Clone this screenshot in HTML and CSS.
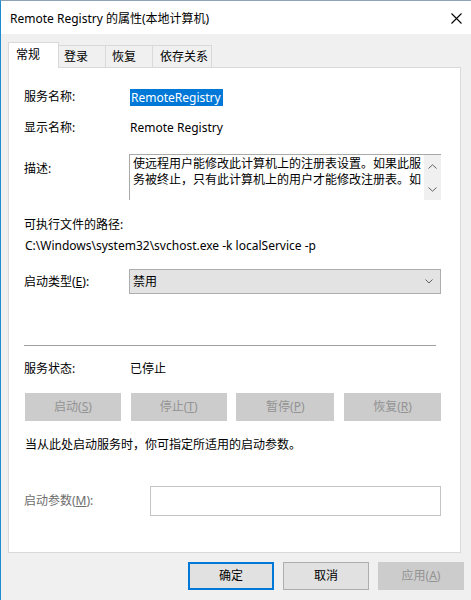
FILE: index.html
```html
<!DOCTYPE html>
<html lang="zh-CN">
<head>
<meta charset="utf-8">
<title>Remote Registry 的属性(本地计算机)</title>
<link rel="stylesheet" href="styles.css">
</head>
<body>
<div class="window">
  <div class="titlebar">
    <span class="title">Remote Registry 的属性(本地计算机)</span>
    <svg class="close" width="11" height="11" viewBox="0 0 11 11"><path d="M0.5 0.5L10.5 10.5M10.5 0.5L0.5 10.5" stroke="#000" stroke-width="1.1" fill="none"/></svg>
  </div>
  <div class="client">
    <div class="tabs">
      <div class="tab active">常规</div>
      <div class="tab t2">登录</div>
      <div class="tab t3">恢复</div>
      <div class="tab t4">依存关系</div>
    </div>
    <div class="panel">
      <div class="row r-name">
        <span class="label">服务名称:</span>
        <span class="selected">RemoteRegistry</span>
      </div>
      <div class="row r-display">
        <span class="label">显示名称:</span>
        <span class="value">Remote Registry</span>
      </div>
      <div class="row r-desc">
        <span class="label label-top">描述:</span>
        <div class="textbox">
          <div class="textbox-text">使远程用户能修改此计算机上的注册表设置。如果此服务被终止，只有此计算机上的用户才能修改注册表。如</div>
          <div class="scrollbar">
            <svg width="9" height="5" viewBox="0 0 9 5"><path d="M0.5 4.5L4.5 0.8L8.5 4.5" stroke="#606060" fill="none"/></svg>
            <svg width="9" height="5" viewBox="0 0 9 5"><path d="M0.5 0.5L4.5 4.2L8.5 0.5" stroke="#606060" fill="none"/></svg>
          </div>
        </div>
      </div>
      <div class="row r-pathlabel"><span>可执行文件的路径:</span></div>
      <div class="row r-path"><span>C:\Windows\system32\svchost.exe -k localService -p</span></div>
      <div class="row r-start">
        <span class="label">启动类型(<u>E</u>):</span>
        <div class="combo">
          <span>禁用</span>
          <svg width="8" height="5" viewBox="0 0 8 5"><path d="M0.5 0.5L4 4L7.5 0.5" stroke="#606060" fill="none"/></svg>
        </div>
      </div>
      <div class="separator"></div>
      <div class="row r-status">
        <span class="label label-status">服务状态:</span>
        <span class="value">已停止</span>
      </div>
      <div class="svc-buttons">
        <div class="btn disabled b1">启动(<u>S</u>)</div>
        <div class="btn disabled b2">停止(<u>T</u>)</div>
        <div class="btn disabled b3">暂停(<u>P</u>)</div>
        <div class="btn disabled b4">恢复(<u>R</u>)</div>
      </div>
      <div class="row r-note"><span>当从此处启动服务时，你可指定所适用的启动参数。</span></div>
      <div class="row r-param">
        <span class="label label-param">启动参数(<u>M</u>):</span>
        <div class="input"></div>
      </div>
    </div>
    <div class="actions">
      <div class="btn default">确定</div>
      <div class="btn">取消</div>
      <div class="btn disabled">应用(<u>A</u>)</div>
    </div>
  </div>
</div>
</body>
</html>
```

FILE: styles.css
```css
html, body {
  margin: 0;
  padding: 0;
}
body {
  width: 471px;
  height: 600px;
  overflow: hidden;
  font-family: "Noto Sans", "Noto Sans CJK SC", sans-serif;
  font-size: 12px;
  color: #000;
  background: #f0f0f0;
}
u {
  text-decoration: underline;
  text-underline-offset: 1px;
}
.window {
  height: 600px;
  box-sizing: border-box;
  border-top: 1px solid #8ea3b8;
  border-left: 1px solid #1f8ccf;
  display: flex;
  flex-direction: column;
  background: #f0f0f0;
}
.titlebar {
  flex: none;
  height: 33px;
  background: #fff;
  display: flex;
  align-items: center;
  justify-content: space-between;
  padding: 0 9px 0 9px;
}
.title {
  line-height: 16px;
  padding-top: 3px;
}
.close {
  display: block;
  margin-top: 1px;
}
.client {
  flex: 1;
  display: flex;
  flex-direction: column;
  padding: 8px 7px 0 7px;
}
.tabs {
  display: flex;
  align-items: flex-end;
  height: 26px;
  margin-bottom: -1px;
}
.tab {
  box-sizing: border-box;
  height: 23px;
  border: 1px solid #d9d9d9;
  border-bottom: none;
  border-left: none;
  background: #f0f0f0;
  line-height: 16px;
  padding: 3px 0 0 6px;
}
.tab.active {
  position: relative;
  z-index: 1;
  height: 26px;
  width: 51px;
  border-left: 1px solid #d9d9d9;
  background: #fff;
  padding: 4px 0 0 7px;
}
.t2 { width: 47px; padding-left: 5px; }
.t3 { width: 47px; }
.t4 { width: 59px; padding-left: 7px; }
.panel {
  box-sizing: border-box;
  height: 486px;
  margin-right: 3px;
  border: 1px solid #d9d9d9;
  background: #fff;
  padding: 0 19px 0 15px;
  display: flex;
  flex-direction: column;
}
.row {
  display: flex;
  align-items: center;
  height: 18px;
  line-height: 18px;
  flex: none;
}
.label {
  width: 106px;
  flex: none;
}
.r-name { margin-top: 20px; }
.selected {
  background: #0078d7;
  color: #fff;
  line-height: 17px;
  padding: 0 2px 0 1px;
}
.r-display { margin-top: 13px; }
.r-desc {
  margin-top: 17px;
  height: 46px;
  align-items: flex-start;
}
.label-top {
  width: 105px;
  padding-top: 6px;
}
.textbox {
  box-sizing: border-box;
  width: 312px;
  height: 46px;
  border-top: 1px solid #a9a9a9;
  border-left: 1px solid #a9a9a9;
  display: flex;
}
.textbox-text {
  width: 291px;
  height: 32px;
  padding: 1px 0 0 3px;
  line-height: 16px;
}
.scrollbar {
  width: 17px;
  height: 45px;
  background: #f0f0f0;
  display: flex;
  flex-direction: column;
  align-items: center;
  justify-content: space-between;
  padding: 9px 0 8px;
  box-sizing: border-box;
}
.scrollbar svg { display: block; }
.r-pathlabel { margin-top: 16px; }
.r-path { margin-top: 3px; padding-left: 1px; }
.r-start {
  margin-top: 14px;
  height: 25px;
}
.r-start .label { width: 105px; }
.combo {
  box-sizing: border-box;
  width: 312px;
  height: 25px;
  border: 1px solid #adadad;
  background: #e3e3e3;
  display: flex;
  align-items: center;
  justify-content: space-between;
  padding: 0 7px 0 3px;
}
.combo svg { display: block; }
.separator {
  flex: none;
  margin-top: 51px;
  height: 1px;
  width: 412px;
  background: #a0a0a0;
}
.r-status { margin-top: 14px; }
.svc-buttons {
  flex: none;
  margin-top: 15px;
  height: 28px;
  display: flex;
  justify-content: space-between;
  padding-left: 1px;
}
.btn {
  box-sizing: border-box;
  height: 28px;
  border: 1px solid #adadad;
  background: #e1e1e1;
  display: flex;
  align-items: center;
  justify-content: center;
  line-height: 16px;
}
.btn.disabled {
  background: #cccccc;
  border-color: #cccccc;
  color: #939393;
}
.b1, .b2 { width: 96px; }
.b3 { width: 98px; }
.b4 { width: 97px; }
.r-note { margin-top: 15px; padding-left: 1px; }
.r-param {
  margin-top: 32px;
  height: 30px;
}
.label-param {
  width: 126px;
  color: #6d6d6d;
}
.input {
  box-sizing: border-box;
  width: 291px;
  height: 30px;
  border: 1px solid #c4c4c4;
  background: #fff;
}
.actions {
  flex: none;
  margin-top: 9px;
  display: flex;
  justify-content: flex-end;
  gap: 9px;
}
.actions .btn { width: 86px; }
.btn.default {
  border: 2px solid #0078d7;
}
```
